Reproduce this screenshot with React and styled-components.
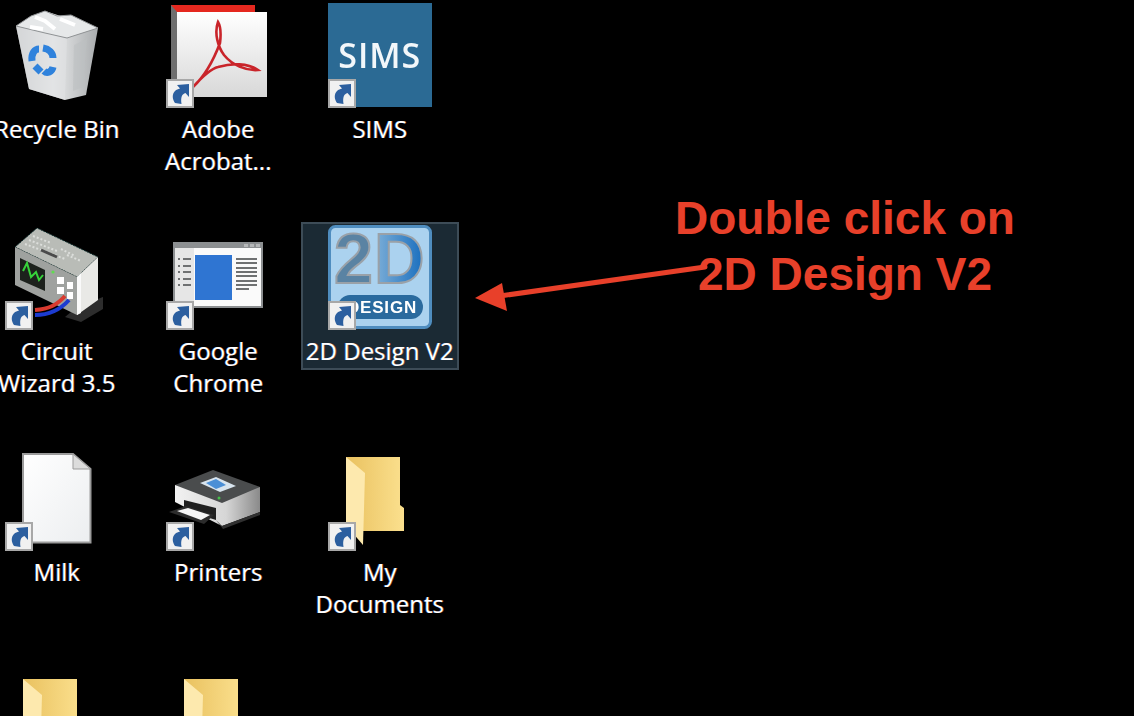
import styled, { createGlobalStyle } from "styled-components";

const GlobalStyle = createGlobalStyle`
	html, body {
		margin: 0;
		height: 100%;
		background: #000;
		overflow: hidden;
	}
`;

const Page = styled.main`
	position: relative;
	width: 1134px;
	height: 716px;
	overflow: hidden;
	background: #000;
`;

const Desktop = styled.section`
	display: grid;
	grid-template-columns: repeat(3, 161.5px);
	grid-auto-rows: 221.7px;
	justify-items: center;
	align-items: start;
	width: max-content;
	margin-left: -24px;
`;

const Item = styled.div`
	box-sizing: border-box;
	width: 158px;
	display: flex;
	flex-direction: column;
	align-items: center;
	padding: 1px 0;
	border: 2px solid ${(p) => (p.$selected ? "#3d4c57" : "transparent")};
	background: ${(p) => (p.$selected ? "#1b2a34" : "transparent")};
`;

const IconBox = styled.div`
	position: relative;
	width: 104px;
	height: 104px;
	flex: none;

	& > svg {
		display: block;
		filter: blur(0.4px);
	}
`;

const Badge = styled.svg`
	position: absolute;
	left: 0;
	bottom: -1px;
	width: 28px;
	height: 29px;
`;

const Label = styled.div`
	margin-top: 6px;
	font-family: "Open Sans", "Noto Sans", sans-serif;
	font-size: 24px;
	line-height: 32px;
	text-align: center;
	color: #fff;
	white-space: pre;
	text-shadow: -0.7px 0 rgba(70, 150, 255, 0.55), 0.7px 0 rgba(255, 130, 50, 0.55);
`;

const SimsTile = styled.div`
	position: absolute;
	inset: 0;
	display: flex;
	align-items: center;
	justify-content: center;
	background: #2b6a94;
	color: #f2f7fa;
	font-family: "Open Sans", sans-serif;
	font-weight: 600;
	font-size: 34px;
	letter-spacing: 1px;
	filter: blur(0.4px);
`;

const Callout = styled.div`
	position: absolute;
	left: 595px;
	top: 190px;
	width: 500px;
	font-family: "Liberation Sans", Arial, sans-serif;
	font-weight: 700;
	font-size: 46px;
	line-height: 56px;
	text-align: center;
	color: #e8402a;
`;

const Arrow = styled.svg`
	position: absolute;
	left: 460px;
	top: 250px;
	width: 260px;
	height: 70px;
`;

const ShortcutBadge = () => (
	<Badge viewBox="0 0 28 29">
		<rect x="1" y="1" width="26" height="27" fill="#f1f1f1" stroke="#a8a8a8" strokeWidth="2" />
		<path
			d="M11 6 L23 5 L23 18 L19.5 14 C16 15 14.5 18 15.5 25 L9 24 C6 20 6 15 9 12 C10.5 10.5 12 10 14 9.5 Z"
			fill="#2c5f9f"
		/>
	</Badge>
);

const RecycleIcon = () => (
	<svg width="104" height="104" viewBox="0 0 104 104">
		<defs>
			<linearGradient id="binBody" x1="0" x2="1" y1="0" y2="0">
				<stop offset="0" stopColor="#b8bbbd" />
				<stop offset="0.45" stopColor="#e9eaeb" />
				<stop offset="1" stopColor="#a9acae" />
			</linearGradient>
		</defs>
		<path d="M11 23 L40 8 L93 25 L81 92 L60 97 L24 86 Z" fill="url(#binBody)" />
		<path d="M11 23 L24 86 L60 97 L62 34 Z" fill="#dfe1e2" opacity="0.7" />
		<path d="M11 23 L26 13 L40 8 L52 13 L66 12 L93 25 L62 35 L40 30 Z" fill="#e6e8e9" stroke="#8f9294" />
		<path d="M30 14 L40 18 L50 26 M55 16 L70 22 M25 24 L38 26" stroke="#fff" strokeWidth="4" fill="none" />
		<path d="M69 42 L82 36 L78 84 L68 88 Z" fill="#bcbfc1" opacity="0.6" />
		<g fill="none" stroke="#2f82dc" strokeWidth="7">
			<path d="M27 58 C26 50 30 46 34 46" />
			<path d="M38 45 C44 46 48 50 48 55" />
			<path d="M48 64 C47 69 42 71 39 68" />
			<path d="M30 63 L36 69" />
		</g>
	</svg>
);

const AcrobatIcon = () => (
	<svg width="104" height="104" viewBox="0 0 104 104">
		<defs>
			<linearGradient id="pdfPage" x1="0" x2="0" y1="0" y2="1">
				<stop offset="0" stopColor="#ffffff" />
				<stop offset="1" stopColor="#d8d8d8" />
			</linearGradient>
		</defs>
		<rect x="5" y="2" width="84" height="8" fill="#e5281f" />
		<path d="M5 2 L11 9 L11 94 L5 84 Z" fill="#6e6e6e" />
		<rect x="11" y="9" width="90" height="85" fill="url(#pdfPage)" />
		<path
			d="M52 19 C48 30 52 44 58 52 C66 62 80 68 92 67 C82 60 66 60 52 64 C44 66 36 74 27 84 C40 72 48 56 54 40 C55 32 55 24 52 19 Z"
			fill="none"
			stroke="#c9242a"
			strokeWidth="2.6"
		/>
	</svg>
);

const CircuitIcon = () => (
	<svg width="104" height="104" viewBox="0 0 104 104">
		<path d="M72 82 L98 72 L98 84 L76 97 L60 92 Z" fill="#2d2d2d" />
		<path d="M10 22 L32 3 L93 32 L72 52 Z" fill="#b9bcb7" stroke="#10302f" strokeDasharray="2 1" />
		<g stroke="#dcdedb" strokeWidth="2" strokeDasharray="2 2">
			<path d="M28 11 L46 18 M24 15 L52 26 M20 19 L60 34" />
			<path d="M56 24 L70 31 M62 30 L76 36" />
		</g>
		<path d="M36 25 L52 32" stroke="#4b4b4b" strokeWidth="3" />
		<path d="M10 22 L72 52 L72 90 L10 60 Z" fill="#9fa29f" />
		<path d="M72 52 L93 32 L93 75 L72 90 Z" fill="#e9e9e6" />
		<path d="M72 52 L76 48 L76 88 L72 90 Z" fill="#fafafa" />
		<path d="M15 33 L40 45 L40 66 L15 55 Z" fill="#1c211c" />
		<path d="M18 46 L22 38 L26 52 L31 47 L34 55 L38 50" fill="none" stroke="#36d23a" strokeWidth="2" />
		<circle cx="48" cy="47" r="1.6" fill="#5fdc4f" />
		<g fill="#ffffff">
			<rect x="52" y="52" width="7" height="7" />
			<rect x="62" y="57" width="6" height="7" />
			<rect x="52" y="62" width="7" height="7" />
			<rect x="62" y="67" width="6" height="7" />
		</g>
		<path d="M30 85 C44 84 52 80 60 71" fill="none" stroke="#d93a2f" strokeWidth="4" />
		<path d="M30 90 C46 90 56 84 64 75" fill="none" stroke="#1c3bd0" strokeWidth="4" />
	</svg>
);

const ChromeIcon = () => (
	<svg width="104" height="104" viewBox="0 0 104 104">
		<rect x="7" y="17" width="90" height="66" fill="#8c8f91" />
		<rect x="9" y="23" width="86" height="58" fill="#fafafa" />
		<rect x="9" y="23" width="19" height="54" fill="#e6e6e6" />
		<g fill="#b5b7b8">
			<rect x="78" y="19" width="4" height="3" />
			<rect x="84" y="19" width="4" height="3" />
			<rect x="90" y="19" width="4" height="3" />
		</g>
		<rect x="29" y="30" width="37" height="45" fill="#2f75d2" />
		{[33, 40, 46, 53, 59].map((y) => (
			<g key={y} fill="#6f7172">
				<rect x="12" y={y} width="2" height="2" />
				<rect x="17" y={y} width="8" height="2" />
			</g>
		))}
		{[33, 37, 42, 46, 50, 55, 59, 63].map((y, i) => (
			<rect key={y} x="70" y={y} width={i === 7 ? 13 : 21} height="2" fill="#6f7172" />
		))}
	</svg>
);

const DesignIcon = () => (
	<svg width="104" height="104" viewBox="0 0 104 104">
		<defs>
			<linearGradient id="designD" x1="0" x2="1" y1="0" y2="0">
				<stop offset="0" stopColor="#7fb0d8" />
				<stop offset="1" stopColor="#176dbe" />
			</linearGradient>
		</defs>
		<rect x="1.5" y="1.5" width="101" height="101" rx="6" fill="#abd2ef" stroke="#4f8dbf" strokeWidth="3" />
		<g fontFamily="'Liberation Sans', Arial, sans-serif" fontWeight="700" fontSize="70" stroke="#9aa1a8" strokeWidth="2">
			<text x="6" y="58" fill="#5a83a3">2</text>
			<text x="46" y="58" fill="url(#designD)">D</text>
		</g>
		<rect x="10" y="70" width="85" height="24" rx="12" fill="#2a6a9e" />
		<text
			x="19"
			y="88"
			fontFamily="'Liberation Sans', Arial, sans-serif"
			fontWeight="700"
			fontSize="17"
			letterSpacing="0.8"
			fill="#fff"
		>
			DESIGN
		</text>
	</svg>
);

const MilkIcon = () => (
	<svg width="104" height="104" viewBox="0 0 104 104">
		<defs>
			<linearGradient id="docPage" x1="0" x2="1" y1="0" y2="1">
				<stop offset="0" stopColor="#ffffff" />
				<stop offset="1" stopColor="#eceef0" />
			</linearGradient>
		</defs>
		<path d="M18 8 L68 8 L85.5 23 L85.5 96.5 L18 96.5 Z" fill="url(#docPage)" stroke="#9b9b9b" strokeWidth="2" />
		<path d="M68 8 L68 23 L85.5 23 Z" fill="#dcdcdc" stroke="#9b9b9b" />
	</svg>
);

const PrinterIcon = () => (
	<svg width="104" height="104" viewBox="0 0 104 104">
		<defs>
			<linearGradient id="printerBody" x1="0" x2="1" y1="0" y2="0">
				<stop offset="0" stopColor="#f2f2f2" />
				<stop offset="0.6" stopColor="#d6d6d6" />
				<stop offset="1" stopColor="#8a8a8a" />
			</linearGradient>
		</defs>
		<path d="M9 39 L9 56 L56 80 L94 66 L94 41 Z" fill="url(#printerBody)" />
		<path d="M9 39 L47 24 L94 41 L56 57 Z" fill="#4a4c4d" />
		<path d="M34 37 L50 31 L70 40 L54 46 Z" fill="#d8e4ee" />
		<path d="M40 37 L50 33 L60 39 L50 43 Z" fill="#4b8fd6" />
		<circle cx="53" cy="52" r="1.5" fill="#45c04a" />
		<path d="M18 54 L50 62 L50 74 L18 64 Z" fill="#202020" />
		<path d="M3 66 L20 60 L48 69 L38 78 Z" fill="#2c2c2c" />
		<path d="M11 65 L22 62 L44 69 L35 74 Z" fill="#f6f6f6" />
		<path d="M50 74 L56 80 L94 66 L94 69 L57 83 Z" fill="#303030" />
	</svg>
);

const FolderIcon = () => (
	<svg width="104" height="104" viewBox="0 0 104 104">
		<defs>
			<linearGradient id="folderBack" x1="0" x2="1" y1="0" y2="0">
				<stop offset="0" stopColor="#e9c15f" />
				<stop offset="1" stopColor="#fbe08e" />
			</linearGradient>
		</defs>
		<path d="M18 11 L72 11 L72 59 L76 62 L76 85 L35 85 L18 70 Z" fill="url(#folderBack)" />
		<path d="M18 11 L37 27 L35 99 L18 79 Z" fill="#fde9ae" />
	</svg>
);

const items = [
	{ name: "Recycle Bin", Icon: RecycleIcon },
	{ name: "Adobe\nAcrobat...", Icon: AcrobatIcon, shortcut: true },
	{ name: "SIMS", Icon: () => <SimsTile>SIMS</SimsTile>, shortcut: true },
	{ name: "Circuit\nWizard 3.5", Icon: CircuitIcon, shortcut: true },
	{ name: "Google\nChrome", Icon: ChromeIcon, shortcut: true },
	{ name: "2D Design V2", Icon: DesignIcon, shortcut: true, selected: true },
	{ name: "Milk", Icon: MilkIcon, shortcut: true },
	{ name: "Printers", Icon: PrinterIcon, shortcut: true },
	{ name: "My\nDocuments", Icon: FolderIcon, shortcut: true },
	{ name: "", Icon: FolderIcon },
	{ name: "", Icon: FolderIcon },
];

export default function App() {
	return (
		<Page>
			<GlobalStyle />
			<Desktop>
				{items.map(({ name, Icon, shortcut, selected }, i) => (
					<Item key={i} $selected={selected}>
						<IconBox>
							<Icon />
							{shortcut && <ShortcutBadge />}
						</IconBox>
						{name && <Label>{name}</Label>}
					</Item>
				))}
			</Desktop>
			<Arrow viewBox="0 0 260 70">
				<path d="M245 17 L40 46" stroke="#e8402a" strokeWidth="5" strokeLinecap="round" />
				<path d="M15 48 L42 33 L47 61 Z" fill="#e8402a" />
			</Arrow>
			<Callout>
				Double click on
				<br />
				2D Design V2
			</Callout>
		</Page>
	);
}
